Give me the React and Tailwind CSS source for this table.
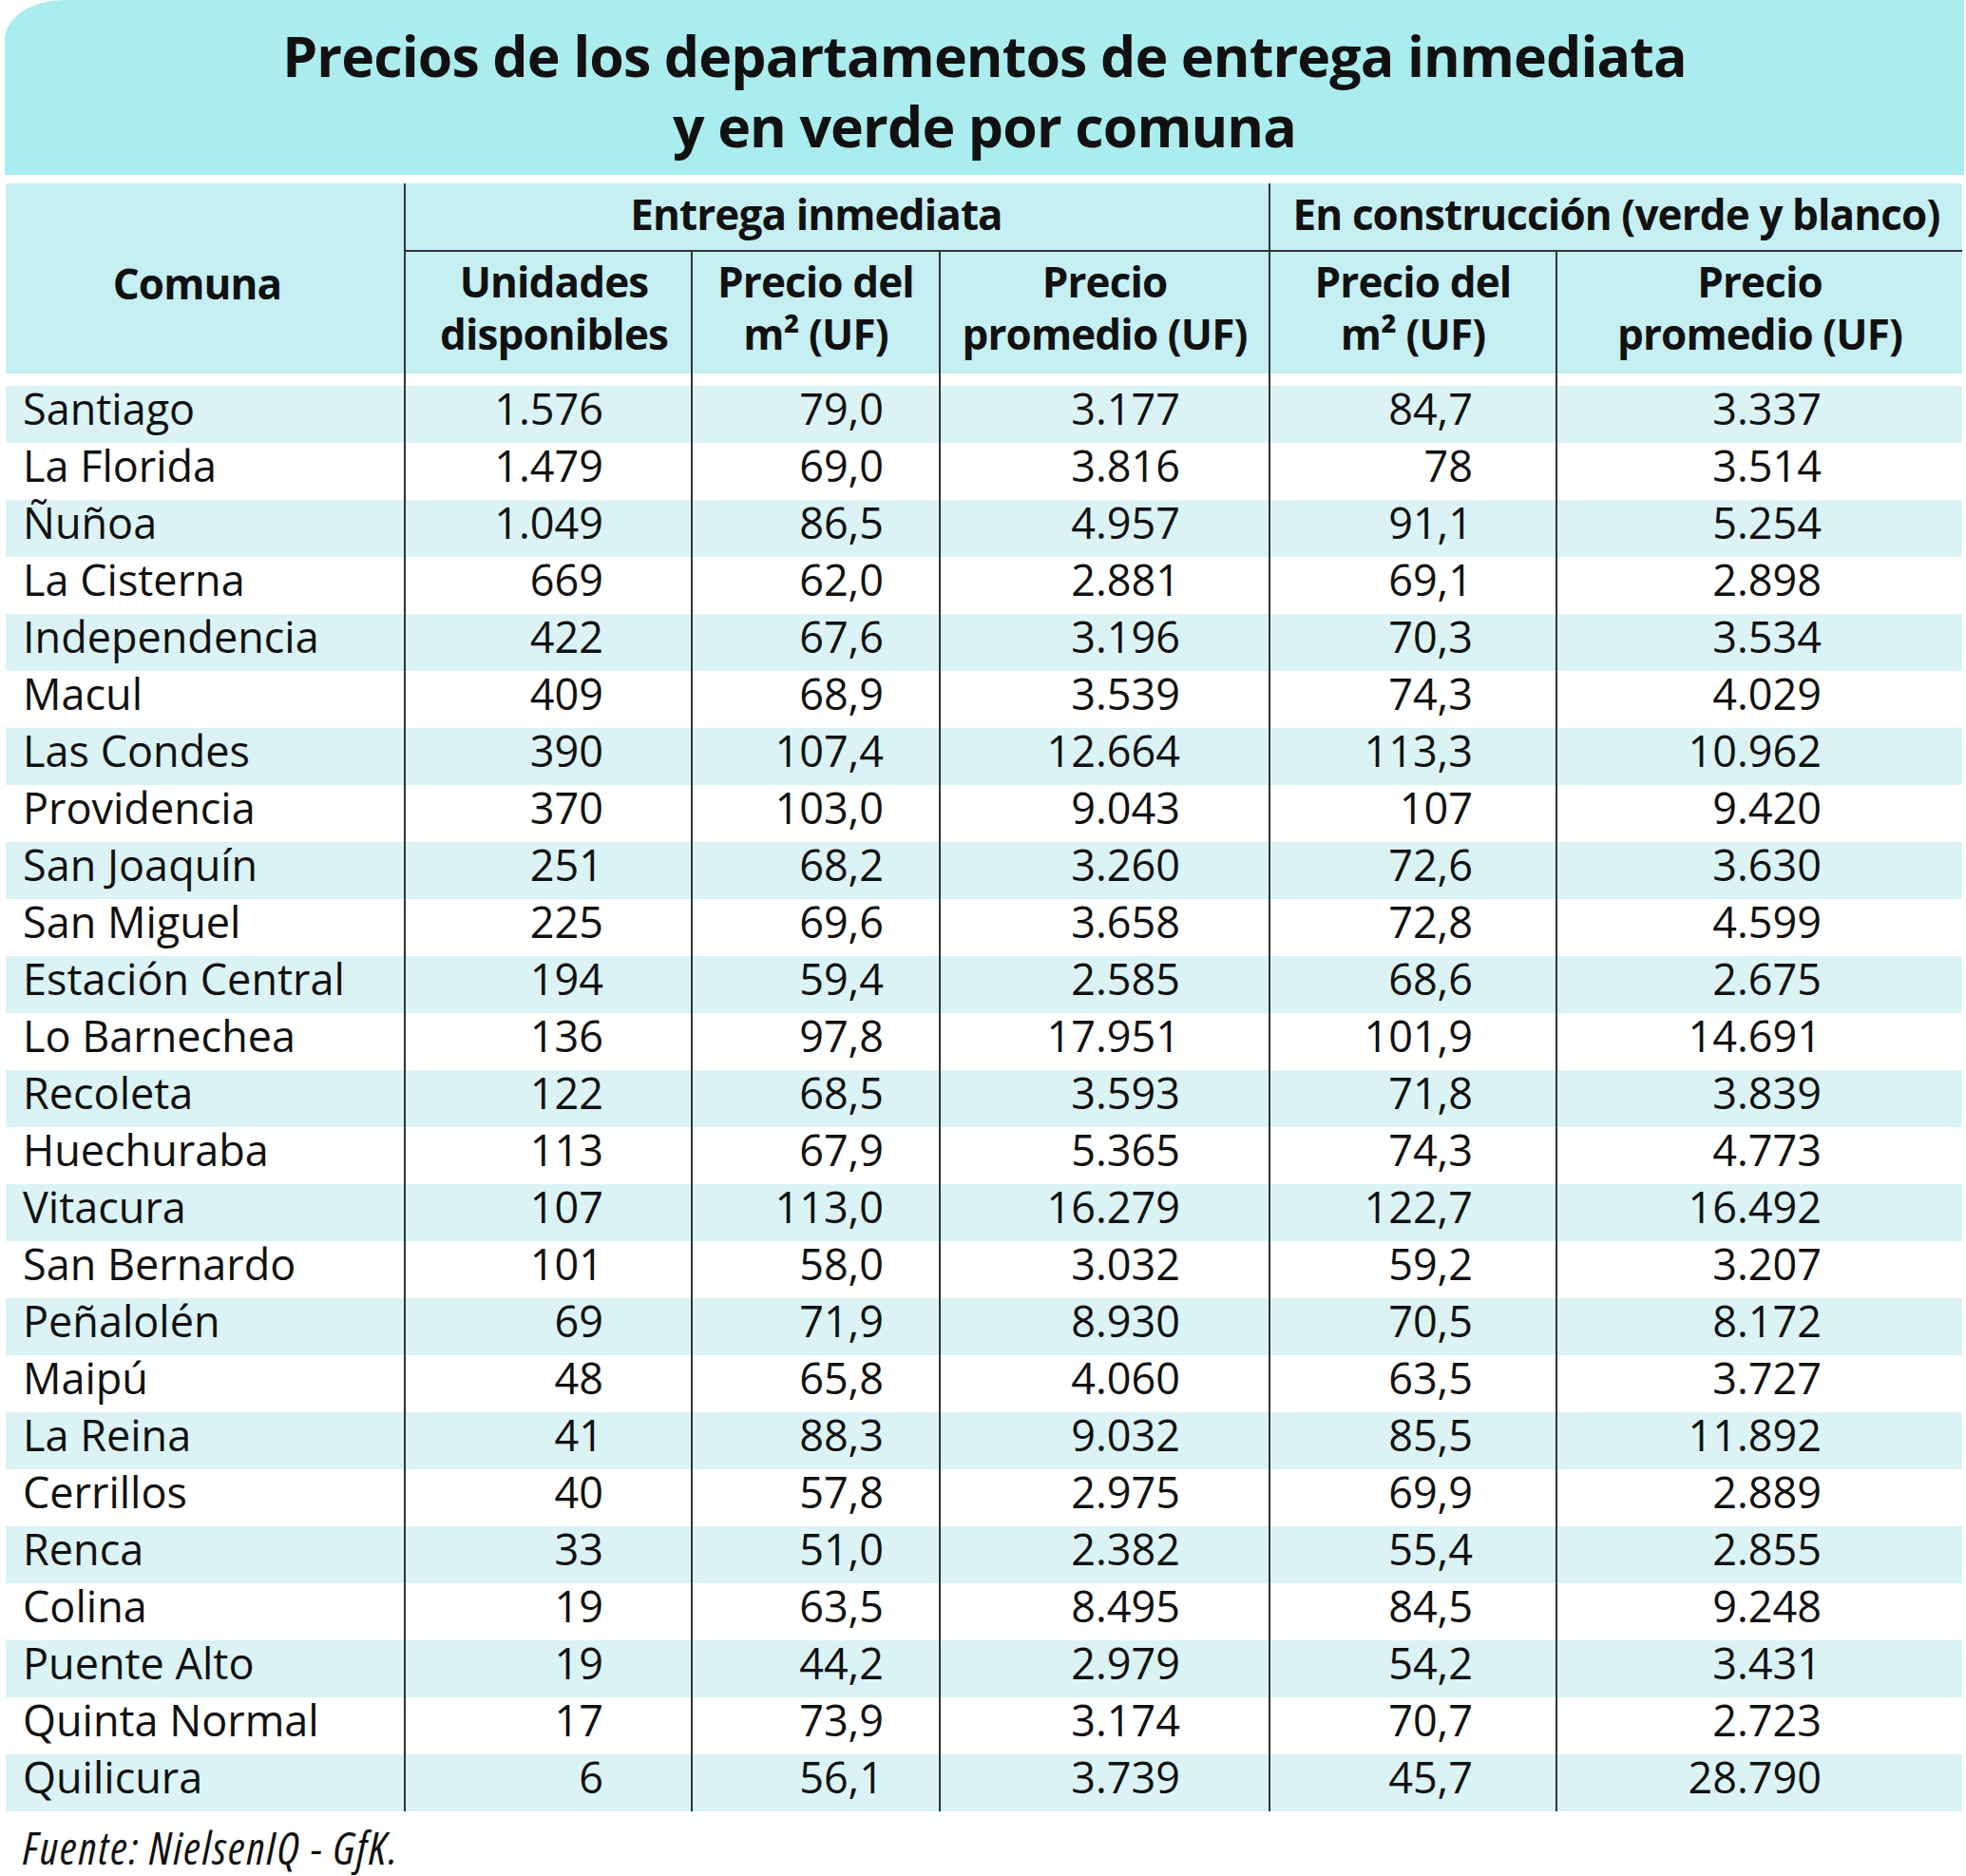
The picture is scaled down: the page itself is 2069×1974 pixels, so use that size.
const rows = [
  ['Santiago', '1.576', '79,0', '3.177', '84,7', '3.337'],
  ['La Florida', '1.479', '69,0', '3.816', '78', '3.514'],
  ['Ñuñoa', '1.049', '86,5', '4.957', '91,1', '5.254'],
  ['La Cisterna', '669', '62,0', '2.881', '69,1', '2.898'],
  ['Independencia', '422', '67,6', '3.196', '70,3', '3.534'],
  ['Macul', '409', '68,9', '3.539', '74,3', '4.029'],
  ['Las Condes', '390', '107,4', '12.664', '113,3', '10.962'],
  ['Providencia', '370', '103,0', '9.043', '107', '9.420'],
  ['San Joaquín', '251', '68,2', '3.260', '72,6', '3.630'],
  ['San Miguel', '225', '69,6', '3.658', '72,8', '4.599'],
  ['Estación Central', '194', '59,4', '2.585', '68,6', '2.675'],
  ['Lo Barnechea', '136', '97,8', '17.951', '101,9', '14.691'],
  ['Recoleta', '122', '68,5', '3.593', '71,8', '3.839'],
  ['Huechuraba', '113', '67,9', '5.365', '74,3', '4.773'],
  ['Vitacura', '107', '113,0', '16.279', '122,7', '16.492'],
  ['San Bernardo', '101', '58,0', '3.032', '59,2', '3.207'],
  ['Peñalolén', '69', '71,9', '8.930', '70,5', '8.172'],
  ['Maipú', '48', '65,8', '4.060', '63,5', '3.727'],
  ['La Reina', '41', '88,3', '9.032', '85,5', '11.892'],
  ['Cerrillos', '40', '57,8', '2.975', '69,9', '2.889'],
  ['Renca', '33', '51,0', '2.382', '55,4', '2.855'],
  ['Colina', '19', '63,5', '8.495', '84,5', '9.248'],
  ['Puente Alto', '19', '44,2', '2.979', '54,2', '3.431'],
  ['Quinta Normal', '17', '73,9', '3.174', '70,7', '2.723'],
  ['Quilicura', '6', '56,1', '3.739', '45,7', '28.790'],
];

const grid = 'grid grid-cols-[419px_302px_261px_347px_302px_428px]';
const line = 'border-l-2 border-[#333333]';

function DataRow({ r, shaded }) {
  return (
    <div className={`${grid} h-[60px] text-[45px] leading-[48px] ${shaded ? 'bg-[#dbf3f5]' : 'bg-white'}`}>
      <div className="pl-[18px] whitespace-nowrap">{r[0]}</div>
      <div className={`${line} text-right pr-[92px]`}>{r[1]}</div>
      <div className={`${line} text-right pr-[58px]`}>{r[2]}</div>
      <div className={`${line} text-right pr-[93px]`}>{r[3]}</div>
      <div className={`${line} text-right pr-[87px]`}>{r[4]}</div>
      <div className={`${line} text-right pr-[148px]`}>{r[5]}</div>
    </div>
  );
}

export default function App() {
  return (
    <div className="w-[2069px] h-[1974px] bg-white font-['Open_Sans',sans-serif] text-[#111111]">
      <div className="ml-[5px] w-[2062px] h-[184px] bg-[#abecee] rounded-tl-[62px_42px] pt-[21px] text-center text-[59px] leading-[74px] font-bold tracking-[-0.015em]">
        <div>Precios de los departamentos de entrega inmediata</div>
        <div>y en verde por comuna</div>
      </div>

      <div className="ml-[6px] w-[2059px] mt-[9px]">
        <div className={`${grid} grid-rows-[72px_128px] bg-[#c6eff3] font-bold text-[44px] tracking-[-0.02em]`}>
          <div className="row-span-2 text-center pt-[78px] pr-[16px] leading-[54px]">Comuna</div>
          <div className={`col-span-3 ${line} border-b-2 text-center leading-[56px] pt-[4px] pr-[44px] whitespace-nowrap`}>Entrega inmediata</div>
          <div className={`col-span-2 ${line} border-b-2 text-center leading-[56px] pt-[4px] whitespace-nowrap`}>En construcción (verde y blanco)</div>
          <div className={`${line} text-center leading-[55px] pt-[4px] pl-[12px]`}>Unidades<br />disponibles</div>
          <div className={`${line} text-center leading-[55px] pt-[4px]`}>Precio del<br />m² (UF)</div>
          <div className={`${line} text-center leading-[55px] pt-[4px]`}>Precio<br />promedio (UF)</div>
          <div className={`${line} text-center leading-[55px] pt-[4px]`}>Precio del<br />m² (UF)</div>
          <div className={`${line} text-center leading-[55px] pt-[4px]`}>Precio<br />promedio (UF)</div>
        </div>
        <div className={`${grid} h-[13px] bg-white`}>
          <div />
          <div className={line} />
          <div className={line} />
          <div className={line} />
          <div className={line} />
          <div className={line} />
        </div>
        {rows.map((r, i) => (
          <DataRow key={r[0]} r={r} shaded={i % 2 === 0} />
        ))}
      </div>

      <div className="ml-[24px] mt-[14px] text-[47px] leading-[48px] italic tracking-[0.04em] [font-stretch:condensed]">
        Fuente: NielsenIQ - GfK.
      </div>
    </div>
  );
}
